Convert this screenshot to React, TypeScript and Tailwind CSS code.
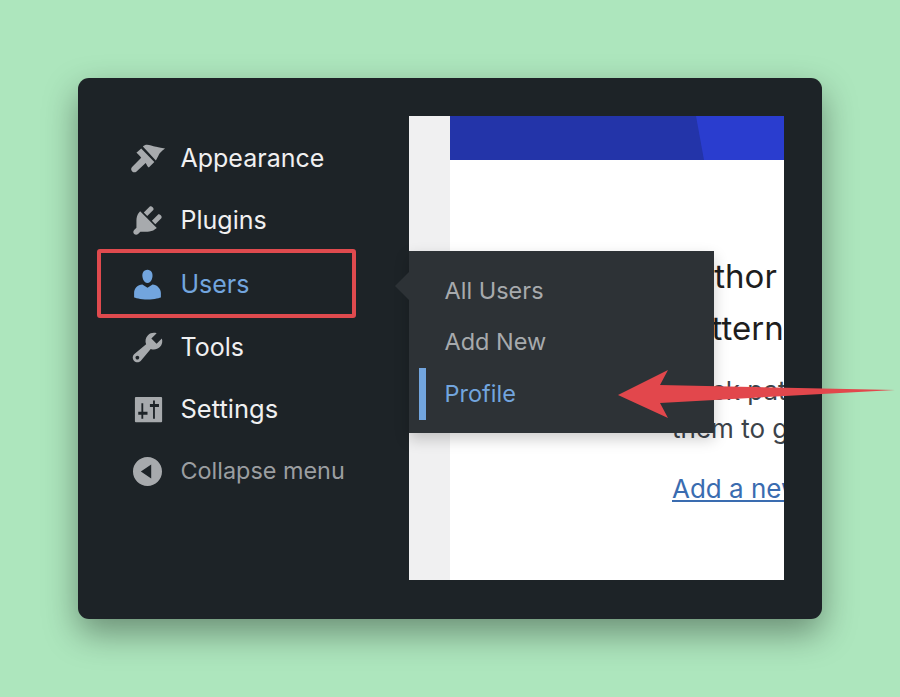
const font = { fontFamily: 'Inter, "Liberation Sans", sans-serif' };

const P: Record<string, string> = {
  appearance:
    "M7.5 3.5C9 1.7 11.5 2.7 14.6 3.7 16.3 4.2 18 4.5 19.5 4.6 17.6 6 16.6 7 16.2 7.8 15.6 9 15 10.2 14.5 11.1ZM6.6 4.6L13.7 11.9 10.7 14.9C10 14.4 9.6 13.4 9 12.4L4.1 17C3 17.9 1.7 17.5 1.3 16.4 1 15.6 1.3 15 1.8 14.5L6.6 9.6C5.8 8.6 4.9 7.6 4 6.9Z",
  plugins:
    "M13.11 4.36L9.87 7.6 8 5.73l3.24-3.24c.35-.34 1.05-.2 1.56.32.52.51.66 1.21.31 1.55zm-8 1.77l.91-1.12 9.01 9.01-1.19.84c-.71.71-2.63 1.16-3.82 1.16H6.14L4.9 17.26c-.59.59-1.54.59-2.12 0-.59-.58-.59-1.53 0-2.12l1.24-1.24v-3.88c0-1.13.4-3.19 1.09-3.89zm7.26 3.97l3.24-3.24c.34-.35 1.04-.21 1.55.31.52.51.66 1.21.31 1.55l-3.24 3.25z",
  users:
    "M10 9.25c-2.27 0-2.73-3.44-2.73-3.44C7 4.02 7.82 2 9.97 2c2.16 0 2.98 2.02 2.71 3.81 0 0-.41 3.44-2.68 3.44zm0 2.57L12.72 10c2.39 0 4.52 2.33 4.52 4.53v2.49s-3.65 1.13-7.24 1.13c-3.65 0-7.24-1.13-7.24-1.13v-2.49c0-2.25 1.94-4.48 4.47-4.48z",
  tools:
    "M16.68 9.77c-1.34 1.34-3.3 1.67-4.95.99l-5.41 6.52c-.99.99-2.59.99-3.58 0s-.99-2.59 0-3.57l6.52-5.42c-.68-1.65-.35-3.61.99-4.95 1.28-1.28 3.12-1.62 4.72-1.06l-2.89 2.89 2.82 2.82 2.86-2.87c.53 1.58.18 3.39-1.08 4.65zM3.81 16.21c.4.39 1.04.39 1.43 0 .4-.4.4-1.04 0-1.43-.39-.4-1.03-.4-1.43 0-.39.39-.39 1.03 0 1.43z",
  settings:
    "M3.7 3.3h13.7c.3 0 .5.2.5.5v12.6c0 .3-.2.5-.5.5H3.7c-.3 0-.5-.2-.5-.5V3.8c0-.3.2-.5.5-.5zM6.7 6.6v4.6H5v1.6h1.7V15h1v-2.2H10v-1.6H7.7V6.6zM13 5.1V7h-1.7v1.6H13V15h1V8.6h2.2V7H14V5.1z",
  collapse:
    "M10 2.16c4.33 0 7.84 3.51 7.84 7.84s-3.51 7.84-7.84 7.84S2.16 14.33 2.16 10 5.67 2.16 10 2.16zM12 6.2l-5.6 3.8 5.6 3.8z",
};

function Icon({ name, color }: { name: string; color: string }) {
  return (
    <svg viewBox="0 0 20 20" className="w-[37px] h-[37px] shrink-0" fill={color} fillRule="evenodd">
      <path d={P[name]} />
    </svg>
  );
}

const rows = [
  { name: "appearance", label: "Appearance", row: "", text: "text-[#f0f0f1] text-[25px]", color: "#a7aaad" },
  { name: "plugins", label: "Plugins", row: "", text: "text-[#f0f0f1] text-[25px]", color: "#a7aaad" },
  { name: "users", label: "Users", row: "mt-[2px]", text: "text-[#72a5de] text-[25px]", color: "#72a5de" },
  { name: "tools", label: "Tools", row: "mt-[1px]", text: "text-[#f0f0f1] text-[25px]", color: "#a7aaad" },
  { name: "settings", label: "Settings", row: "", text: "text-[#f0f0f1] text-[25.5px]", color: "#a7aaad" },
  { name: "collapse", label: "Collapse menu", row: "", text: "text-[#9b9ea1] text-[23.4px]", color: "#a7aaad" },
];

export default function App() {
  return (
    <div
      className="relative w-[900px] h-[697px] overflow-hidden bg-[#ade6bd] pt-[78px] pl-[78px]"
      style={font}
    >
      <div className="relative flex w-[744px] h-[541px] rounded-[11px] bg-[#1d2327] shadow-[0_14px_34px_rgba(0,0,0,0.38)]">
        {/* Sidebar */}
        <div className="w-[331px] pt-[49px] pl-[51px] flex flex-col">
          {rows.map((r) => (
            <div key={r.name} className={`flex items-center h-[62px] gap-[14.5px] leading-none ${r.row}`}>
              <Icon name={r.name} color={r.color} />
              <span className={r.text}>{r.label}</span>
            </div>
          ))}
        </div>

        {/* Highlight box */}
        <div className="absolute left-[19px] top-[171px] w-[259px] h-[69px] border-[4.5px] border-[#df4a4e] rounded-[3px]" />

        {/* Page preview */}
        <div className="mt-[38px] w-[375px] h-[464px] flex bg-white overflow-hidden">
          <div className="w-[41px] shrink-0 bg-[#f0f0f1]" />
          <div className="flex-1 min-w-0 flex flex-col">
            <div className="relative h-[44px] bg-[#2334a9] overflow-hidden">
              <div className="absolute right-0 top-0 h-full w-[88px] bg-[#2a3dcf] [clip-path:polygon(0_0,100%_0,100%_100%,8px_100%)]" />
            </div>
            <div className="pl-[222px] pt-[90px] w-[600px] text-[#1e1e1e]">
              <div className="text-[33px] leading-[52px] whitespace-nowrap">
                Author
                <br />
                Patterns
              </div>
              <div className="mt-[18px] text-[26px] leading-[38px] text-[#3c434a] whitespace-nowrap">
                Block patterns
                <br />
                them to get
              </div>
              <div className="mt-[22px] text-[26px] leading-[38px] text-[#3a6cb0] underline whitespace-nowrap">
                Add a new pattern
              </div>
            </div>
          </div>
        </div>

        {/* Flyout */}
        <div className="absolute left-[331px] top-[173px] w-[305px] h-[182px] bg-[#2d3236] shadow-[0_6px_14px_rgba(0,0,0,0.2)] flex flex-col pt-[14px] text-[23.5px] leading-none text-[#a7aaad]">
          <div className="absolute left-[-14px] top-[21px] w-0 h-0 border-y-[14px] border-y-transparent border-r-[14px] border-r-[#2d3236]" />
          <div className="h-[51.5px] flex items-center pl-[35.5px]">All Users</div>
          <div className="h-[51px] flex items-center pl-[35.5px]">Add New</div>
          <div className="h-[52px] flex items-center pl-[35.5px] text-[#72a5de] relative">
            <div className="absolute left-[10px] top-0 w-[7px] h-[52px] bg-[#72a5de]" />
            Profile
          </div>
        </div>
      </div>

      {/* Red arrow */}
      <svg className="absolute left-0 top-0 w-[900px] h-[697px] pointer-events-none" viewBox="0 0 900 697">
        <polygon points="618,395 668,370 660,385 895,390 660,403 668,418" fill="#e2474c" />
      </svg>
    </div>
  );
}
